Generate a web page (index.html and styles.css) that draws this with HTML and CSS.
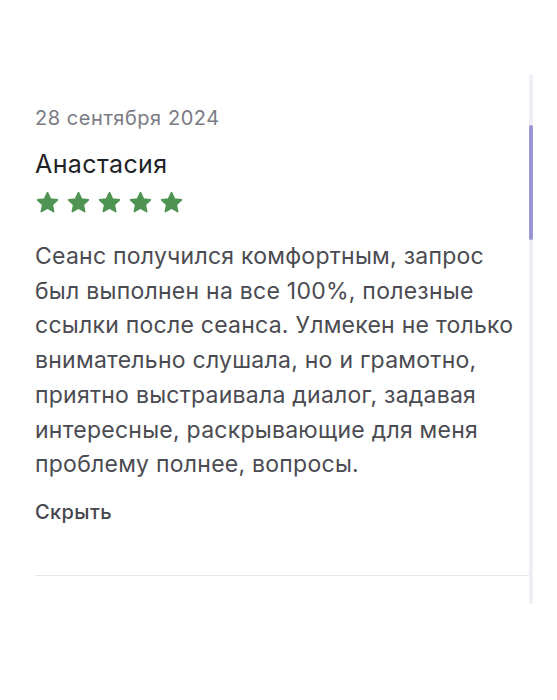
FILE: index.html
```html
<!DOCTYPE html>
<html lang="ru">
<head>
<meta charset="utf-8">
<link rel="stylesheet" href="styles.css">
</head>
<body>
<div class="page">
  <div class="review">
    <div class="content">
      <div class="date">28 сентября 2024</div>
      <div class="name">Анастасия</div>
      <div class="stars">
        <svg class="star" viewBox="0 0 24 24"><path d="M12 2.6l2.9 6.1 6.6.8-4.9 4.6 1.3 6.6L12 17.4l-5.9 3.3 1.3-6.6-4.9-4.6 6.6-.8z"/></svg>
        <svg class="star" viewBox="0 0 24 24"><path d="M12 2.6l2.9 6.1 6.6.8-4.9 4.6 1.3 6.6L12 17.4l-5.9 3.3 1.3-6.6-4.9-4.6 6.6-.8z"/></svg>
        <svg class="star" viewBox="0 0 24 24"><path d="M12 2.6l2.9 6.1 6.6.8-4.9 4.6 1.3 6.6L12 17.4l-5.9 3.3 1.3-6.6-4.9-4.6 6.6-.8z"/></svg>
        <svg class="star" viewBox="0 0 24 24"><path d="M12 2.6l2.9 6.1 6.6.8-4.9 4.6 1.3 6.6L12 17.4l-5.9 3.3 1.3-6.6-4.9-4.6 6.6-.8z"/></svg>
        <svg class="star" viewBox="0 0 24 24"><path d="M12 2.6l2.9 6.1 6.6.8-4.9 4.6 1.3 6.6L12 17.4l-5.9 3.3 1.3-6.6-4.9-4.6 6.6-.8z"/></svg>
      </div>
      <p class="text">Сеанс получился комфортным, запрос<br>был выполнен на все 100%, полезные<br>ссылки после сеанса. Улмекен не только<br>внимательно слушала, но и грамотно,<br>приятно выстраивала диалог, задавая<br>интересные, раскрывающие для меня<br>проблему полнее, вопросы.</p>
      <div class="hide">Скрыть</div>
    </div>
    <div class="track"><div class="thumb"></div></div>
  </div>
</div>
</body>
</html>
```
FILE: styles.css
```css
html, body {
  margin: 0;
  padding: 0;
  background: #ffffff;
}
body {
  font-family: Inter, "Noto Sans", sans-serif;
  width: 557px;
  height: 700px;
  overflow: hidden;
}
.page {
  padding: 74px 24px 0 35px;
}
.review {
  display: flex;
  width: 498px;
  height: 530px;
}
.content {
  flex: 1;
  padding-top: 31px;
  border-bottom: 1px solid #e6e6ec;
  height: 470px;
  white-space: nowrap;
}
.date {
  font-size: 20px;
  letter-spacing: 0.55px;
  color: #7b7b84;
  line-height: 26px;
}
.name {
  margin-top: 18px;
  font-size: 25px;
  letter-spacing: 0.4px;
  color: #1f1f26;
  line-height: 30px;
  font-weight: 400;
}
.stars {
  display: flex;
  gap: 6px;
  margin-top: 11px;
  margin-left: 0;
}
.star {
  width: 25px;
  height: 25px;
  fill: #4f9453;
  stroke: #4f9453;
  stroke-width: 1.6;
  stroke-linejoin: round;
}
.text {
  margin: 24px 0 0 0;
  font-size: 23px;
  letter-spacing: 0.25px;
  line-height: 34.7px;
  color: #4b4b52;
}
.hide {
  margin-top: 17px;
  font-size: 20px;
  letter-spacing: 0.4px;
  color: #46464d;
  font-weight: 500;
  line-height: 26px;
}
.track {
  width: 4px;
  height: 530px;
  background: #efeef6;
  border-radius: 2px;
  position: relative;
}
.thumb {
  position: absolute;
  top: 51px;
  left: 0;
  width: 4px;
  height: 115px;
  background: #9a95d3;
  border-radius: 2px;
}
```
